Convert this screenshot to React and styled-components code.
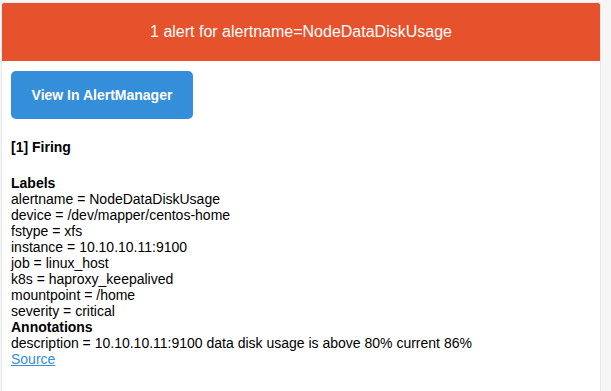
import React from "react";
import styled, { createGlobalStyle } from "styled-components";

const GlobalStyle = createGlobalStyle`
  html, body {
    margin: 0;
    padding: 0;
    background-color: #f6f6f6;
    font-family: "Liberation Sans", Arial, Helvetica, sans-serif;
  }
`;

const Page = styled.div`
  padding: 2px 0 0 1px;
`;

const Card = styled.div`
  box-sizing: border-box;
  width: 600px;
  min-height: calc(100vh - 2px);
  background-color: #fff;
  border: 1px solid #e9e9e9;
  border-bottom: 0;
  border-radius: 3px 3px 0 0;
  overflow: hidden;
`;

const Header = styled.div`
  height: 58px;
  display: flex;
  align-items: center;
  justify-content: center;
  background-color: #e6522c;
  color: #fff;
  font-size: 16px;
`;

const Content = styled.div`
  padding: 10px 9px 0;
  font-size: 14px;
  line-height: 16px;
  color: #000;
`;

const Button = styled.a`
  display: flex;
  align-items: center;
  justify-content: center;
  width: 182px;
  height: 48px;
  background-color: #348eda;
  border-radius: 5px;
  color: #fff;
  font-weight: bold;
  font-size: 14px;
  text-decoration: none;
`;

const Status = styled.div`
  margin-top: 20px;
  font-weight: bold;
`;

const Section = styled.div`
  margin-top: 20px;
`;

const Title = styled.div`
  font-weight: bold;
`;

const Line = styled.div``;

const Link = styled.a`
  color: #348eda;
  text-decoration: underline;
`;

const labels = [
  ["alertname", "NodeDataDiskUsage"],
  ["device", "/dev/mapper/centos-home"],
  ["fstype", "xfs"],
  ["instance", "10.10.10.11:9100"],
  ["job", "linux_host"],
  ["k8s", "haproxy_keepalived"],
  ["mountpoint", "/home"],
  ["severity", "critical"],
];

const annotations = [
  ["description", "10.10.10.11:9100 data disk usage is above 80% current 86%"],
];

export default function App() {
  return (
    <Page>
      <GlobalStyle />
      <Card>
        <Header>1 alert for alertname=NodeDataDiskUsage</Header>
        <Content>
          <Button href="#">View In AlertManager</Button>
          <Status>[1] Firing</Status>
          <Section>
            <Title>Labels</Title>
            {labels.map(([k, v]) => (
              <Line key={k}>
                {k} = {v}
              </Line>
            ))}
            <Title>Annotations</Title>
            {annotations.map(([k, v]) => (
              <Line key={k}>
                {k} = {v}
              </Line>
            ))}
            <Link href="#">Source</Link>
          </Section>
        </Content>
      </Card>
    </Page>
  );
}
